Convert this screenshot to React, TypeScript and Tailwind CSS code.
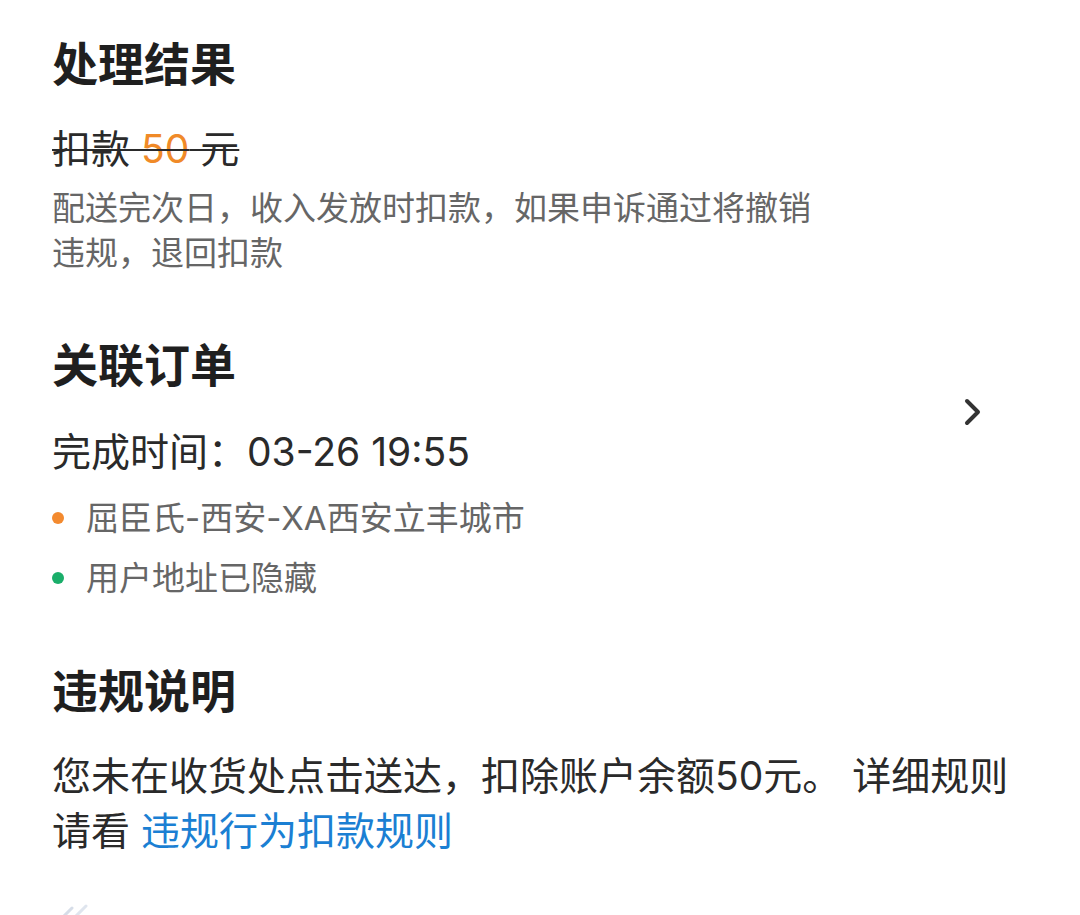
import React from "react";

const font = { fontFamily: 'Inter, "Noto Sans CJK SC", "Noto Sans", sans-serif' };

export default function App() {
  return (
    <div
      className="w-[1080px] h-[915px] overflow-hidden bg-white pl-[52px] pr-[96px] pt-[36px] text-[#333333]"
      style={font}
    >
      {/* 处理结果 */}
      <div className="text-[46px] leading-[56px] font-bold text-[#1f1f1f]">处理结果</div>
      <div className="mt-[32px] text-[39px] leading-[50px] text-[#2a2a2a] line-through decoration-[#2a2a2a] decoration-2">
        扣款 <span className="text-[#f08a28]">50</span> 元
      </div>
      <div className="mt-[12px] text-[33px] leading-[45px] text-[#666666]">
        配送完次日，收入发放时扣款，如果申诉通过将撤销
        <br />
        违规，退回扣款
      </div>

      {/* 关联订单 */}
      <div className="mt-[61px] flex justify-between">
        <div className="flex flex-col">
          <div className="text-[46px] leading-[56px] font-bold text-[#1f1f1f]">关联订单</div>
          <div className="mt-[34px] text-[39px] leading-[50px] text-[#2a2a2a]">完成时间：03-26 19:55</div>
          <div className="mt-[16px] flex items-center gap-[22px] text-[33px] leading-[50px] text-[#666666]">
            <span className="w-[12px] h-[12px] rounded-full bg-[#f38a2f]" />
            <span>屈臣氏-西安-XA西安立丰城市</span>
          </div>
          <div className="mt-[10px] flex items-center gap-[22px] text-[33px] leading-[50px] text-[#666666]">
            <span className="w-[12px] h-[12px] rounded-full bg-[#1aae6a]" />
            <span>用户地址已隐藏</span>
          </div>
        </div>
        <div className="pt-[61px]">
          <svg width="22" height="28" viewBox="0 0 22 28" fill="none">
            <path
              d="M5 3 L16 14 L5 25"
              stroke="#333333"
              strokeWidth="4"
              strokeLinecap="round"
              strokeLinejoin="round"
            />
          </svg>
        </div>
      </div>

      {/* 违规说明 */}
      <div className="mt-[60px] text-[46px] leading-[56px] font-bold text-[#1f1f1f]">违规说明</div>
      <div className="mt-[29px] whitespace-nowrap text-[39px] leading-[55px] text-[#2a2a2a]">
        您未在收货处点击送达，扣除账户余额50元。 详细规则
        <br />
        请看 <span className="text-[#1b7fd3]">违规行为扣款规则</span>
      </div>

      <div className="mt-[42px] ml-[8px]">
        <svg width="40" height="20" viewBox="0 0 40 20" fill="none">
          <path d="M2 18 L12 8" stroke="#d6dde8" strokeWidth="3" strokeLinecap="round" />
          <path d="M14 18 L26 6" stroke="#dfe5ee" strokeWidth="3" strokeLinecap="round" />
        </svg>
      </div>
    </div>
  );
}
